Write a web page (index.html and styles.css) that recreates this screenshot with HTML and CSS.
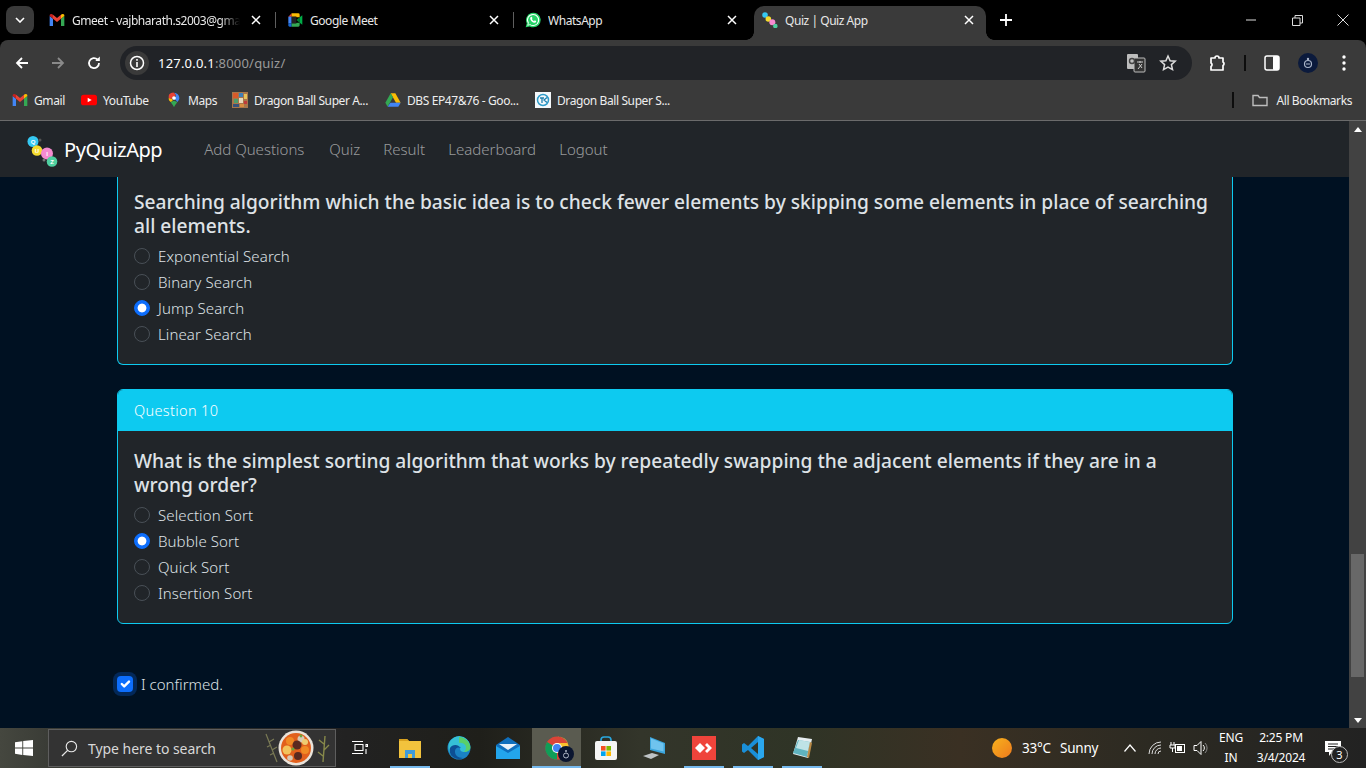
FILE: index.html
```html
<!DOCTYPE html>
<html lang="en">
<head>
<meta charset="utf-8">
<title>Quiz | Quiz App</title>
<link rel="stylesheet" href="styles.css">
</head>
<body>
<div class="screen">
  <div class="tabstrip">
    <div class="collapse"><svg width="10" height="6" viewBox="0 0 10 6"><path d="M1 1l4 4 4-4" fill="none" stroke="#fff" stroke-width="1.6"/></svg></div>
    <div class="tabs">
      <div class="tab">
        <svg class="fav" viewBox="0 0 24 24"><path fill="#4285F4" d="M1 21h5V10L1 6z"/><path fill="#34A853" d="M18 21h5V6l-5 4z"/><path fill="#EA4335" d="M6 10V4l6 5 6-5v6l-6 5z"/><path fill="#FBBC04" d="M18 4v6l5-4V5c0-2-3-3-5-1z"/><path fill="#C5221F" d="M1 6l5 4V4C4 2 1 3 1 5z"/></svg>
        <span class="tabtitle fade">Gmeet - vajbharath.s2003@gma</span>
        <svg class="tabx" viewBox="0 0 10 10"><path d="M1 1l8 8M9 1l-8 8" stroke="#fff" stroke-width="1.5"/></svg>
      </div>
      <div class="tabsep"></div>
      <div class="tab">
        <svg class="fav" viewBox="0 0 24 24"><path fill="#EA4335" d="M2 7l5-5v5z"/><path fill="#4285F4" d="M2 7h5v10H2z"/><path fill="#1967D2" d="M2 17h5v5H4a2 2 0 01-2-2z"/><path fill="#FBBC04" d="M7 2h10a2 2 0 012 2v4h-5V7H7z"/><path fill="#34A853" d="M7 17h7v-1h5v4a2 2 0 01-2 2H7z"/><path fill="#00832D" d="M14 12l5-4v8z"/><path fill="#00AC47" d="M19 8l4-3v14l-4-3z"/><rect x="7" y="7" width="7" height="10" fill="#222"/></svg>
        <span class="tabtitle">Google Meet</span>
        <svg class="tabx" viewBox="0 0 10 10"><path d="M1 1l8 8M9 1l-8 8" stroke="#fff" stroke-width="1.5"/></svg>
      </div>
      <div class="tabsep"></div>
      <div class="tab">
        <svg class="fav wa" viewBox="0 0 24 24"><path fill="#25D366" d="M1 23l1.700-6A11 11 0 1112 23a11 11 0 01-5-1.300z"/><path fill="#fff" d="M12 3a9 9 0 00-7.600 13.800L3.500 20.500l3.800-1A9 9 0 1012 3z"/><path fill="#25D366" d="M12 4.500a7.500 7.500 0 00-6.300 11.500l-.8 3 3-.8A7.500 7.500 0 1012 4.500z"/><path fill="#fff" d="M9 7.500c-1 .6-1.500 1.800-1 3.200 1 2.500 3 4.500 5.500 5.300 1.500.4 2.800-.2 3.300-1.500l-.2-1-2-1-1 1.200c-1.500-.6-2.600-1.700-3.300-3.200l.9-1-.9-2.200z"/></svg>
        <span class="tabtitle">WhatsApp</span>
        <svg class="tabx" viewBox="0 0 10 10"><path d="M1 1l8 8M9 1l-8 8" stroke="#fff" stroke-width="1.5"/></svg>
      </div>
      <div class="tabgap"></div>
      <div class="tab active">
        <svg class="fav" viewBox="0 0 24 24"><circle cx="4.500" cy="4.500" r="4.200" fill="#35c8f2"/><circle cx="9.500" cy="10.500" r="4.200" fill="#f5dc2e"/><circle cx="15.500" cy="15.500" r="4.500" fill="#f58bd0"/><circle cx="20" cy="21" r="3.400" fill="#4fd0a0"/></svg>
        <span class="tabtitle">Quiz | Quiz App</span>
        <svg class="tabx" viewBox="0 0 10 10"><path d="M1 1l8 8M9 1l-8 8" stroke="#fff" stroke-width="1.5"/></svg>
      </div>
    </div>
    <svg class="newtab" viewBox="0 0 12 12"><path d="M6 0v12M0 6h12" stroke="#fff" stroke-width="1.800"/></svg>
    <div class="winctl">
      <div class="winbtn"><svg width="10" height="2" viewBox="0 0 10 2"><path d="M0 1h10" stroke="#ddd"/></svg></div>
      <div class="winbtn"><svg width="11" height="11" viewBox="0 0 11 11"><path d="M.5 3h7.500v7.500H.5zM3 3V.5h7.500V8H8" fill="none" stroke="#ddd"/></svg></div>
      <div class="winbtn"><svg width="12" height="12" viewBox="0 0 12 12"><path d="M.5.5l11 11M11.500.5l-11 11" stroke="#ddd"/></svg></div>
    </div>
  </div>

  <div class="toolbar">
    <div class="navbtns">
      <svg class="navicon" viewBox="0 0 16 16"><path d="M14 8H3M8 3L3 8l5 5" fill="none" stroke="#fff" stroke-width="1.800"/></svg>
      <svg class="navicon" viewBox="0 0 16 16"><path d="M2 8h11M8 3l5 5-5 5" fill="none" stroke="#8a8a8a" stroke-width="1.800"/></svg>
      <svg class="navicon" viewBox="0 0 16 16"><path d="M13 8a5 5 0 11-1.500-3.500" fill="none" stroke="#fff" stroke-width="1.800"/><path d="M13.800 1.500v4.500H9.300z" fill="#fff"/></svg>
    </div>
    <div class="omnibox">
      <div class="siteinfo"><svg width="16" height="16" viewBox="0 0 16 16"><circle cx="8" cy="8" r="6.500" fill="none" stroke="#fff" stroke-width="1.500"/><path d="M8 7v5M8 4v1.800" stroke="#fff" stroke-width="1.600"/></svg></div>
      <span class="url">127.0.0.1<span class="urldim">:8000/quiz/</span></span>
      <svg class="translate" viewBox="0 0 20 20"><rect x="1" y="1" width="11" height="15" rx="1" fill="#bdbdbd"/><rect x="8" y="5" width="11" height="14" rx="1" fill="#333" stroke="#bdbdbd"/><circle cx="6" cy="8" r="2.500" fill="none" stroke="#444" stroke-width="1.400"/><path d="M11 9h6M14 8v2M12 16l4-5M13 11l3 4" stroke="#ccc" fill="none"/></svg>
      <svg class="star" viewBox="0 0 18 18"><path d="M9 2l2.100 4.700 5.100.5-3.800 3.400 1.100 5L9 13l-4.500 2.600 1.100-5L1.800 7.200l5.100-.5z" fill="none" stroke="#ddd" stroke-width="1.500"/></svg>
    </div>
    <div class="toolicons">
      <svg class="ti-ext" viewBox="0 0 18 18"><path d="M2 4h4a2 2 0 014 0h4v4a2 2 0 010 3.500V16H2v-3.500a2 2 0 000-3.500z" fill="none" stroke="#fff" stroke-width="1.700" stroke-linejoin="round"/></svg>
      <div class="vline"></div>
      <svg class="ti-side" viewBox="0 0 16 16"><rect x="1" y="1" width="14" height="14" rx="2" fill="none" stroke="#fff" stroke-width="1.500"/><rect x="9" y="1" width="6" height="14" rx="1" fill="#fff"/></svg>
      <svg class="ti-avatar" viewBox="0 0 20 20"><circle cx="10" cy="10" r="10" fill="#0b1a3c"/><circle cx="10" cy="11" r="3.500" fill="none" stroke="#a9b4c8" stroke-width="1.200"/><circle cx="10" cy="6" r="1.200" fill="#a9b4c8"/><path d="M8 11h4" stroke="#a9b4c8"/></svg>
      <svg class="ti-menu" viewBox="0 0 4 16"><circle cx="2" cy="2" r="1.700" fill="#fff"/><circle cx="2" cy="8" r="1.700" fill="#fff"/><circle cx="2" cy="14" r="1.700" fill="#fff"/></svg>
    </div>
  </div>

  <div class="bookmarks">
    <div class="bm"><svg class="fav" viewBox="0 0 24 24"><path fill="#4285F4" d="M1 21h5V10L1 6z"/><path fill="#34A853" d="M18 21h5V6l-5 4z"/><path fill="#EA4335" d="M6 10V4l6 5 6-5v6l-6 5z"/><path fill="#FBBC04" d="M18 4v6l5-4V5c0-2-3-3-5-1z"/><path fill="#C5221F" d="M1 6l5 4V4C4 2 1 3 1 5z"/></svg><span>Gmail</span></div>
    <div class="bm"><svg class="fav" viewBox="0 0 24 24"><rect y="4" width="24" height="16" rx="4" fill="#f00"/><path d="M10 8.500v7l6-3.500z" fill="#fff"/></svg><span>YouTube</span></div>
    <div class="bm"><svg class="fav" viewBox="0 0 24 24"><path fill="#34A853" d="M12 23c-1-3-3-5-5-8l5-2 5 2c-2 3-4 5-5 8z"/><path fill="#FBBC04" d="M5 13a8 8 0 01-1-4l5 1 1 3-3 2z"/><path fill="#4285F4" d="M12 1a8 8 0 018 8c0 2-1 4-3 6l-4-5 2-5z"/><path fill="#EA4335" d="M5 3.500A8 8 0 0112 1l3 4-6 5-5-1c0-2 0-4 1-5.500z"/><circle cx="12" cy="9" r="2.800" fill="#fff"/></svg><span>Maps</span></div>
    <div class="bm"><svg class="fav" viewBox="0 0 16 16"><rect width="16" height="16" fill="#a8764a"/><rect x="1" y="1" width="5" height="5" fill="#d85a2a"/><rect x="7" y="1" width="4" height="4" fill="#3f7fb8"/><rect x="12" y="2" width="3" height="5" fill="#e6c35a"/><rect x="2" y="7" width="4" height="4" fill="#4f9c6b"/><rect x="7" y="6" width="4" height="5" fill="#e8d7b8"/><rect x="12" y="9" width="3" height="3" fill="#c03a3a"/><rect x="1" y="12" width="6" height="3" fill="#38527a"/><rect x="8" y="12" width="4" height="3" fill="#d98c3f"/></svg><span>Dragon Ball Super A...</span></div>
    <div class="bm"><svg class="fav" viewBox="0 0 24 24"><path fill="#FBBC04" d="M8.500 2h7l8 14h-7z"/><path fill="#34A853" d="M8.500 2L.5 16l3.500 6 8-14z"/><path fill="#4285F4" d="M4 22h16l3.500-6H8z"/></svg><span>DBS EP47&amp;76 - Goo...</span></div>
    <div class="bm"><svg class="fav" viewBox="0 0 16 16"><rect width="16" height="16" fill="#f4f8fb"/><circle cx="8" cy="8" r="5.500" fill="none" stroke="#2e9bc9" stroke-width="1.500"/><path d="M5 6h4M7 6v5M12 5.500L9 8l3 2.500" stroke="#1d7fae" fill="none" stroke-width="1.300"/></svg><span>Dragon Ball Super S...</span></div>
    <div class="bmspacer"></div>
    <div class="vline"></div>
    <div class="bm allbm"><svg class="fav" viewBox="0 0 16 16"><path d="M1 3.500h5l1.500 2H15v8H1z" fill="none" stroke="#bdbdbd" stroke-width="1.400"/></svg><span>All Bookmarks</span></div>
  </div>

  <div class="viewport">
    <div class="pagecol">
      <nav class="sitenav">
        <svg class="logo" viewBox="0 0 33 35">
          <circle cx="7" cy="8.500" r="5.500" fill="#35c8f2"/><text x="7" y="10.500" class="logoq">Q</text>
          <circle cx="11" cy="17.500" r="5.300" fill="#f5dc2e"/><text x="11" y="19.500" class="logoq">U</text>
          <circle cx="21" cy="20.500" r="6" fill="#f58bd0"/><text x="21" y="22.500" class="logoq">I</text>
          <circle cx="26" cy="28.500" r="5.300" fill="#4fd0a0"/><text x="26" y="30.500" class="logoq">Z</text>
          <circle cx="14" cy="7" r="1.500" fill="#555"/><circle cx="18" cy="27" r="1.500" fill="#777"/>
        </svg>
        <a class="brand">PyQuizApp</a>
        <div class="navlinks">
          <a class="navlink">Add Questions</a>
          <a class="navlink">Quiz</a>
          <a class="navlink">Result</a>
          <a class="navlink">Leaderboard</a>
          <a class="navlink">Logout</a>
        </div>
      </nav>
      <main class="quiz">
        <section class="card clipped">
          <div class="cardbody first">
            <h5 class="question">Searching algorithm which the basic idea is to check fewer elements by skipping some elements in place of searching all elements.</h5>
            <label class="opt"><input type="radio" name="q9"><span>Exponential Search</span></label>
            <label class="opt"><input type="radio" name="q9"><span>Binary Search</span></label>
            <label class="opt"><input type="radio" name="q9" checked><span>Jump Search</span></label>
            <label class="opt"><input type="radio" name="q9"><span>Linear Search</span></label>
          </div>
        </section>
        <section class="card">
          <div class="cardhead">Question 10</div>
          <div class="cardbody">
            <h5 class="question">What is the simplest sorting algorithm that works by repeatedly swapping the adjacent elements if they are in a wrong order?</h5>
            <label class="opt"><input type="radio" name="q10"><span>Selection Sort</span></label>
            <label class="opt"><input type="radio" name="q10" checked><span>Bubble Sort</span></label>
            <label class="opt"><input type="radio" name="q10"><span>Quick Sort</span></label>
            <label class="opt"><input type="radio" name="q10"><span>Insertion Sort</span></label>
          </div>
        </section>
        <label class="confirm"><input type="checkbox" checked><span>I confirmed.</span></label>
      </main>
    </div>
    <div class="scrollbar">
      <svg class="sbarrow" viewBox="0 0 8 5"><path d="M4 0l4 5H0z" fill="#fff"/></svg>
      <div class="sbtrack"><div class="sbthumb"></div></div>
      <svg class="sbarrow" viewBox="0 0 8 5"><path d="M4 5l4-5H0z" fill="#fff"/></svg>
    </div>
  </div>

  <footer class="taskbar">
    <div class="start"><svg width="18" height="16" viewBox="0 0 18 16"><path fill="#fff" d="M0 2.300l7.300-1.100v6.400H0zM8.200 1l9.800-1v7.600H8.200zM0 8.500h7.300v6.400L0 13.800zM8.200 8.500H18V16l-9.800-1.100z"/></svg></div>
    <div class="search">
      <svg class="lens" viewBox="0 0 18 18"><circle cx="11" cy="7" r="5.500" fill="none" stroke="#e8e8e8" stroke-width="1.200"/><path d="M7 11l-6 6" stroke="#e8e8e8" stroke-width="1.300"/></svg>
      <span class="searchtext">Type here to search</span>
      <svg class="dish" viewBox="0 0 70 36">
        <path d="M3 4l11 28M6 12l5-3M9 20l5-3M8 15l-4 2M11 23l-4 2" stroke="#7a7a55" fill="none" stroke-width="1.200"/>
        <path d="M60 32l2-26M61 20l5-5M61 14l-5-4M60 26l-5-4" stroke="#87894a" fill="none" stroke-width="1.400"/>
        <circle cx="33" cy="18" r="17.500" fill="#e9e3da"/><circle cx="33" cy="18" r="15" fill="#e2601c"/>
        <circle cx="27" cy="11" r="4" fill="#f08a24"/><circle cx="38" cy="9" r="3.500" fill="#d8c9b4"/><circle cx="34" cy="15" r="4.500" fill="#5a2a20"/><circle cx="42" cy="12" r="3" fill="#eecb70"/><circle cx="24" cy="20" r="4.500" fill="#f3c45c"/><circle cx="42" cy="20" r="4" fill="#f08a24"/><circle cx="35" cy="26" r="4" fill="#5a2a20"/><circle cx="27" cy="28" r="2.800" fill="#d8c9b4"/><circle cx="30" cy="19" r="1.600" fill="#6aa53a"/><circle cx="38" cy="6" r="1.400" fill="#6aa53a"/>
      </svg>
    </div>
    <div class="apps">
      <div class="app"><svg class="appicon taskview" viewBox="0 0 16 16"><path d="M0 1.500h11M3 4.500h8v6H3zM0 13.500h11M14 4.500h1.500v2H14zM14 9v5" fill="none" stroke="#fff" stroke-width="1.100"/></svg></div>
      <div class="app on"><svg class="appicon big" viewBox="0 0 24 22"><path d="M1 2h8l2 2h12v17H1z" fill="#f2c33d"/><path d="M1 2h8l2 2H1z" fill="#d9a21f"/><path d="M7 13h10v8h-3v-4h-4v4H7z" fill="#3f9bd9"/></svg></div>
      <div class="app"><svg class="appicon big" viewBox="0 0 24 24"><circle cx="12" cy="12" r="11.500" fill="#1a82c4"/><path d="M2 7a11 11 0 0121 2c1 5-3 7-6 7-2 0-4-1-4-3 0-1 1-2 1-2s-3-1-6 1-4 6-1 9C3 19 0 13 2 7z" fill="#35c0d6"/><path d="M12 1c6 0 11 5 11.500 11-1 3-4 4-6.500 4 5-5 0-10-5-9z" fill="#59d06a"/><path d="M3 12c2-4 9-4 10 0-1-1-5-1-5 4 0 3 3 6 8 6-7 3-15-2-13-10z" fill="#0d4f94"/></svg></div>
      <div class="app"><svg class="appicon big" viewBox="0 0 24 24"><path d="M0 9l12-8 12 8v14H0z" fill="#0f6fbd"/><path d="M0 10l12 7 12-7v13H0z" fill="#23a5ec"/><path d="M3 8h18l-9 6z" fill="#e8f2fa"/></svg></div>
      <div class="app current"><svg class="appicon big" viewBox="0 0 24 24"><circle cx="12" cy="12" r="11.500" fill="#db4437"/><path d="M12 12L2 6a11.500 11.500 0 0010 17.500z" fill="#0f9d58"/><path d="M12 .5h0A11.500 11.500 0 0122 18l-6-6-4-5h11a11 11 0 00-11-6.500z" fill="#fbc02d"/><circle cx="12" cy="12" r="5" fill="#fff"/><circle cx="12" cy="12" r="4" fill="#4285f4"/></svg><svg class="chromebadge" viewBox="0 0 16 16"><circle cx="8" cy="8" r="8" fill="#0a1530"/><circle cx="8" cy="9.500" r="2.500" fill="none" stroke="#aeb6c6"/><circle cx="8" cy="5" r="1" fill="#aeb6c6"/></svg></div>
      <div class="app"><svg class="appicon big" viewBox="0 0 24 24"><path d="M7 6V4a3 3 0 013-3h4a3 3 0 013 3v2" fill="none" stroke="#2aa8e0" stroke-width="1.600"/><rect x="1" y="5" width="22" height="19" rx="2" fill="#f5f5f5"/><rect x="7" y="10" width="4.600" height="4.600" fill="#f25022"/><rect x="12.400" y="10" width="4.600" height="4.600" fill="#7fba00"/><rect x="7" y="15.400" width="4.600" height="4.600" fill="#00a4ef"/><rect x="12.400" y="15.400" width="4.600" height="4.600" fill="#ffb900"/></svg></div>
      <div class="app"><svg class="appicon big" viewBox="0 0 24 24"><path d="M7 1l15 6v11L7 14z" fill="#3ba5dc"/><path d="M8 2.500l12.500 5v8L8 12.500z" fill="#6fc3ee"/><path d="M0 20l9-3 7 2-8 4z" fill="#bfc4c6"/></svg></div>
      <div class="app on"><svg class="appicon big" viewBox="0 0 24 24"><rect width="24" height="24" fill="#ef443b"/><path d="M8 7l5 5-5 5-5-5z" fill="#fff"/><path d="M15 7l5 5-5 5-2-2 3-3-3-3z" fill="#fff"/></svg></div>
      <div class="app on"><svg class="appicon big" viewBox="0 0 24 24"><path d="M17 0l6 3v18l-6 3L7 14l-4 3-2-1.500v-7L3 7l4 3z" fill="#1a8fd8"/><path d="M17 0l6 3v18l-6 3z" fill="#2aa7ee"/><path d="M17 6v12l-7-6z" fill="#2f3426"/></svg></div>
      <div class="app on"><svg class="appicon big" viewBox="0 0 24 24"><path d="M8 1l14 2-4 19-15-4z" fill="#e6edf0"/><path d="M8 4l12 2-3 15L3 17z" fill="#5fb3bf"/><path d="M9 4l11 2-2 9-12-3z" fill="#bfe3e6"/><path d="M20 6l2 1-3 15-2-1z" fill="#b98a47"/></svg></div>
    </div>
    <div class="tray">
      <div class="weather"><span class="sun"></span><span>33°C</span><span class="sunny">Sunny</span></div>
      <div class="trayicon chevron"><svg width="12" height="8" viewBox="0 0 12 8"><path d="M.5 7.500L6 1l5.500 6.500" fill="none" stroke="#fff" stroke-width="1.200"/></svg></div>
      <div class="trayicon"><svg width="14" height="14" viewBox="0 0 14 14"><path d="M1 13a12 12 0 0112-12M4 13a9 9 0 019-9M7 13a6 6 0 016-6M10 13a3 3 0 013-3" fill="none" stroke="#ddd"/></svg></div>
      <div class="trayicon"><svg width="17" height="14" viewBox="0 0 17 14"><path d="M2 1v3M5 1v3M1 4h5v3H1zM3.500 7v4" stroke="#fff" fill="none"/><rect x="6.500" y="3.500" width="9" height="8" fill="none" stroke="#fff"/><rect x="8" y="5" width="5" height="5" fill="#fff"/></svg></div>
      <div class="trayicon"><svg width="16" height="16" viewBox="0 0 16 16"><path d="M1 5.500h3l4-4v13l-4-4H1z" fill="none" stroke="#fff"/><path d="M10 5a4 4 0 010 6" fill="none" stroke="#fff"/><path d="M12 3a7 7 0 010 10" fill="none" stroke="#888"/></svg></div>
      <div class="lang"><span>ENG</span><span>IN</span></div>
      <div class="clock"><span>2:25 PM</span><span>3/4/2024</span></div>
      <div class="notif"><svg width="16" height="15" viewBox="0 0 16 15"><path d="M0 0h16v11H7l-3 4v-4H0z" fill="#fff"/><path d="M3 3h10M3 5.500h10M3 8h7" stroke="#222"/></svg><span class="badge">3</span></div>
    </div>
  </footer>
</div>
</body>
</html>
```

FILE: styles.css
```css
* { box-sizing: border-box; }
html, body { margin: 0; padding: 0; height: 100%; overflow: hidden; }
body { font-family: "Noto Sans", "Open Sans", sans-serif; color: #fff; background: #000; }
svg { display: block; flex: none; }

.screen { width: 1366px; height: 768px; display: flex; flex-direction: column; overflow: hidden; }

/* tab strip */
.tabstrip { height: 40px; background: #000; display: flex; align-items: flex-start; padding-left: 6px; flex: none; }
.collapse { width: 28px; height: 28px; margin-top: 6px; border-radius: 8px; background: #3a3a3a; display: flex; align-items: center; justify-content: center; }
.tabs { display: flex; margin-left: 7px; height: 40px; align-items: flex-end; }
.tab { width: 232px; height: 34px; padding: 0 8px 6px; display: flex; align-items: center; gap: 7px; font-size: 12px; color: #e8e8e8; position: relative; }
.tab.active { background: #3a3a3a; border-radius: 10px 10px 0 0; margin-left: -1px; }
.tab.active::before, .tab.active::after { content: ""; position: absolute; bottom: 0; width: 8px; height: 8px; }
.tab.active::before { left: -8px; background: radial-gradient(circle at 0 0, transparent 7.500px, #3a3a3a 8px); }
.tab.active::after { right: -8px; background: radial-gradient(circle at 100% 0, transparent 7.500px, #3a3a3a 8px); }
.tabtitle { flex: 1; white-space: nowrap; overflow: hidden; letter-spacing: -.45px; }
.fade { -webkit-mask-image: linear-gradient(90deg, #000 88%, transparent 100%); mask-image: linear-gradient(90deg, #000 88%, transparent 100%); margin-right: 4px; }
.fav { width: 16px; height: 16px; }
.tabx { width: 10px; height: 10px; margin-right: 4px; }
.tabsep { width: 6px; height: 16px; margin-bottom: 12px; position: relative; }
.tabsep::after { content: ""; position: absolute; left: 2px; top: 0; width: 1px; height: 16px; background: #5f5f5f; }
.tabgap { width: 6px; }
.newtab { width: 12px; height: 12px; margin: 14px 0 0 14px; }
.winctl { margin-left: auto; display: flex; height: 40px; }
.winbtn { width: 46px; height: 40px; display: flex; align-items: center; justify-content: center; }

/* toolbar */
.toolbar { height: 40px; background: #3a3a3a; border-radius: 8px 8px 0 0; display: flex; align-items: flex-start; flex: none; }
.navbtns { display: flex; width: 120px; padding: 15px 0 0 14px; gap: 20px; }
.navicon { width: 16px; height: 16px; }
.omnibox { width: 1072px; height: 34px; margin-top: 6px; border-radius: 17px; background: #212327; display: flex; align-items: center; padding: 0 15px 0 5px; }
.siteinfo { width: 24px; height: 24px; border-radius: 50%; background: #3a3a3a; display: flex; align-items: center; justify-content: center; }
.url { margin-left: 9px; font-size: 13px; color: #fff; white-space: nowrap; letter-spacing: .2px; }
.urldim { color: #9a9a9a; }
.translate { width: 20px; height: 20px; margin-left: auto; }
.star { width: 18px; height: 18px; margin-left: 13px; }
.toolicons { display: flex; align-items: center; height: 34px; margin-top: 6px; }
.ti-ext { width: 18px; height: 18px; margin-left: 17px; }
.vline { width: 2px; height: 16px; background: #0d0d0d; flex: none; }
.toolicons .vline { margin-left: 17px; }
.ti-side { width: 16px; height: 16px; margin-left: 18px; }
.ti-avatar { width: 20px; height: 20px; margin-left: 18px; }
.ti-menu { width: 4px; height: 16px; margin-left: 24px; }

/* bookmarks */
.bookmarks { height: 41px; background: #3a3a3a; border-bottom: 1px solid #6b6b6b; display: grid; grid-template-columns: 69px 85px 66px 153px 150px 140px 1fr 2px auto; align-items: center; padding: 0 14px 0 12px; font-size: 12px; color: #eee; flex: none; }
.bm { display: flex; align-items: center; gap: 6px; white-space: nowrap; letter-spacing: -.4px; }
.allbm { margin-left: 18px; gap: 8px; }

/* page */
.viewport { flex: 1; display: flex; min-height: 0; background: #001122; }
.pagecol { flex: 1; min-width: 0; display: flex; flex-direction: column; }
.sitenav { height: 56px; background: #212529; display: flex; align-items: center; padding-left: 26px; flex: none; }
.logo { width: 33px; height: 35px; margin-top: 2px; }
.logoq { font: 700 6px "Liberation Sans", sans-serif; text-anchor: middle; fill: #fff; }
.brand { font-size: 20px; margin-left: 5px; color: #fff; letter-spacing: -.45px; }
.navlinks { display: grid; grid-template-columns: 125px 54px 65px 111px auto; margin-left: 42px; }
.navlink { font-size: 15px; font-weight: 300; color: rgba(255,255,255,.55); white-space: nowrap; }

.quiz { flex: 1; padding: 0 116px 0 117px; overflow: hidden; }
.card { border: 1px solid #0dcaf0; border-radius: 6px; background: #212529; margin-bottom: 24px; }
.card.clipped { border-top: 0; border-radius: 0 0 6px 6px; }
.cardhead { height: 41px; background: #0dcaf0; border-radius: 5px 5px 0 0; padding: 0 0 2px 16px; display: flex; align-items: center; font-size: 14.500px; font-weight: 300; color: #fff; letter-spacing: .35px; }
.cardbody { padding: 18px 16px 17px; }
.cardbody.first { padding-top: 13px; }
.question { margin: 0 0 5px; font-size: 19.200px; line-height: 24px; font-weight: 500; color: #dee2e6; }
.opt { display: flex; align-items: center; gap: 8px; height: 26px; font-size: 15px; font-weight: 300; color: #dee2e6; letter-spacing: .1px; }
.opt input { appearance: none; -webkit-appearance: none; margin: 0; width: 16px; height: 16px; border: 1px solid #495057; border-radius: 50%; background: #212529; flex: none; }
.opt input:checked { border-color: #0d6efd; background: radial-gradient(circle, #fff 0 4px, #0d6efd 4.800px); }
.confirm { display: flex; align-items: center; gap: 8px; margin-top: 52px; height: 16px; font-size: 15px; font-weight: 300; color: #dee2e6; }
.confirm input { appearance: none; -webkit-appearance: none; margin: 0; width: 16px; height: 16px; border-radius: 4px; background: #0d6efd url("data:image/svg+xml,%3Csvg xmlns='http://www.w3.org/2000/svg' viewBox='0 0 20 20'%3E%3Cpath fill='none' stroke='%23fff' stroke-linecap='round' stroke-linejoin='round' stroke-width='3' d='M6 10l3 3 6-6'/%3E%3C/svg%3E") center/contain no-repeat; box-shadow: 0 0 0 4px rgba(13,110,253,.25); flex: none; }

.scrollbar { width: 17px; background: #424242; display: flex; flex-direction: column; align-items: center; padding: 6px 0 5px; flex: none; }
.sbarrow { width: 8px; height: 5px; }
.sbtrack { flex: 1; width: 13px; margin-top: 422px; margin-bottom: 41px; }
.sbthumb { height: 100%; background: #686868; }

/* taskbar */
.taskbar { height: 40px; flex: none; display: flex; background: linear-gradient(90deg, #45473f 0, #3a3c36 48px, #222 345px, #1f1f1a 480px, #33352a 640px, #2f3426 800px, #3a3023 960px, #2c2a22 1150px, #222 1366px); }
.start { width: 48px; display: flex; align-items: center; justify-content: center; }
.search { width: 288px; margin: 1px 0; background: #333; border: 1px solid #5e5e5e; display: flex; align-items: center; padding-left: 12px; position: relative; }
.lens { width: 17px; height: 17px; }
.searchtext { margin-left: 10px; font-size: 14px; color: #d8d8d8; white-space: nowrap; letter-spacing: -.05px; }
.dish { width: 70px; height: 36px; margin-left: auto; margin-right: 2px; }
.apps { display: flex; margin-left: 0; }
.app { width: 49px; height: 40px; display: flex; align-items: center; justify-content: center; position: relative; }
.app.on::after, .app.current::after { content: ""; position: absolute; bottom: 0; left: 5px; width: 40px; height: 2px; background: #76b9ed; }
.app.current { background: #5a5b50; }
.app.current::after { left: 0; width: 49px; }
.appicon { width: 16px; height: 16px; }
.appicon.big { width: 24px; height: 24px; }
.taskview { margin-left: -1px; }
.chromebadge { position: absolute; left: 26px; top: 18px; width: 16px; height: 16px; }
.tray { margin-left: auto; display: flex; align-items: center; height: 40px; font-size: 12px; color: #fff; }
.weather { display: flex; align-items: center; gap: 10px; font-size: 13.500px; width: 126px; letter-spacing: -.2px; }
.sun { width: 20px; height: 20px; border-radius: 50%; background: linear-gradient(135deg, #f7b21d, #ee7a1d); }
.sunny { margin-left: -1px; }
.trayicon { width: 23px; display: flex; justify-content: center; align-items: center; }
.chevron { margin-right: 2px; }
.lang, .clock { display: flex; flex-direction: column; align-items: center; line-height: 20px; letter-spacing: -.2px; }
.lang { width: 30px; margin-left: 4px; }
.clock { width: 70px; }
.notif { width: 50px; height: 40px; position: relative; display: flex; align-items: center; padding-left: 9px; }
.badge { position: absolute; left: 15px; top: 18px; width: 17px; height: 17px; border: 1px solid #bbb; border-radius: 50%; background: #222; font-size: 11px; line-height: 15px; text-align: center; }
```
